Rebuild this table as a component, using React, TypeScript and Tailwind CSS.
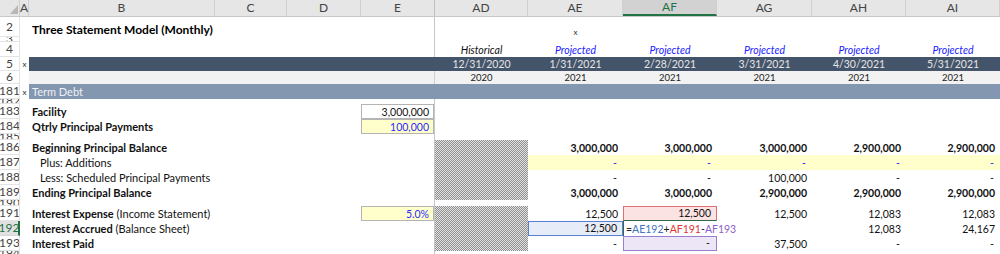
import type { ReactNode } from "react"

const dataW = ["w-[95px]", "w-[94px]", "w-[95px]", "w-[94px]", "w-[94px]"]
const hatch =
  "bg-[image:repeating-conic-gradient(#8e8e8e_0_25%,#e4e4e4_0_50%)] bg-[length:2px_2px] bg-fixed"

const headers = [
  { l: "AE", w: "w-[95px]" },
  { l: "AF", w: "w-[94px]", on: true },
  { l: "AG", w: "w-[95px]" },
  { l: "AH", w: "w-[94px]" },
  { l: "AI", w: "w-[94px]" },
]

const dates = ["1/31/2021", "2/28/2021", "3/31/2021", "4/30/2021", "5/31/2021"]

function RowNum({ n, active }: { n: string; active?: boolean }) {
  return (
    <div
      className={`flex w-[20px] shrink-0 items-center justify-center overflow-hidden border-b text-[12px] leading-none ${
        active
          ? "border-r-2 border-b-[#d6d6d6] border-r-[#217346] bg-[#e1e1e1] text-[#217346]"
          : "border-r border-[#e3e3e3] bg-white text-[#444]"
      }`}
    >
      {n}
    </div>
  )
}

function Gap({ n, h }: { n: string; h: string }) {
  return (
    <div className={`flex ${h} overflow-hidden`}>
      <RowNum n={n} />
      <div className="w-[414px] shrink-0" />
      <div className="w-[1px] shrink-0 bg-[#c6c6c6]" />
    </div>
  )
}

type LineProps = {
  n: string
  label?: ReactNode
  indent?: boolean
  e?: ReactNode
  hatched?: boolean
  vals?: ReactNode[]
  cellCls?: string[]
  valCls?: string
  rowBg?: string
  active?: boolean
}

function Line({ n, label, indent, e, hatched, vals = [], cellCls = [], valCls = "", rowBg = "", active }: LineProps) {
  return (
    <div className="flex h-[15px]">
      <RowNum n={n} active={active} />
      <div className="w-[9px] shrink-0" />
      <div
        className={`flex w-[332px] shrink-0 items-end whitespace-nowrap pb-[2px] text-[11px] leading-none text-[#111] ${
          indent ? "pl-[11px]" : "pl-[3px]"
        }`}
      >
        {label}
      </div>
      <div className="w-[73px] shrink-0">{e}</div>
      <div className="w-[1px] shrink-0 bg-[#c6c6c6]" />
      <div className={`w-[93px] shrink-0 ${hatched ? hatch : ""}`} />
      <div className={`flex flex-1 ${rowBg}`}>
        {dataW.map((w, i) => (
          <div
            key={w + i}
            className={`${w} flex shrink-0 items-end justify-end whitespace-nowrap pb-[2px] pr-[5px] text-[10.5px] leading-none text-[#111] ${valCls} ${
              cellCls[i] ?? ""
            }`}
          >
            {vals[i]}
          </div>
        ))}
      </div>
    </div>
  )
}

function InputBox({ children, yellow }: { children: ReactNode; yellow?: boolean }) {
  return (
    <div
      className={`flex h-full items-end justify-end border border-[#b4b4b4] pb-[1px] pr-[4px] text-[10.5px] leading-none ${
        yellow ? "bg-[#ffffcc] text-[#2b2bff]" : "bg-white text-[#111]"
      }`}
    >
      {children}
    </div>
  )
}

const dash = <span className="pr-[1px]">-</span>

export default function App() {
  return (
    <div className="h-[254px] w-[1000px] overflow-hidden bg-white font-['Lato',sans-serif]">
      {/* column headers */}
      <div className="flex h-[17px] border-b border-[#c8c8c8] bg-[#e6e6e6] text-[12px] leading-none text-[#444]">
        <div className="flex w-[20px] shrink-0 items-end justify-end border-r border-[#d0d0d0] pb-[2px] pr-[1px]">
          <svg width="8" height="9" viewBox="0 0 8 9">
            <path d="M8 0 L8 9 L0 9 Z" fill="#b8b8b8" />
          </svg>
        </div>
        <div className="flex w-[9px] shrink-0 items-center justify-center border-r border-[#d0d0d0]">A</div>
        <div className="flex w-[186px] shrink-0 items-center justify-center border-r border-[#d0d0d0]">B</div>
        <div className="flex w-[72px] shrink-0 items-center justify-center border-r border-[#d0d0d0]">C</div>
        <div className="flex w-[74px] shrink-0 items-center justify-center border-r border-[#d0d0d0]">D</div>
        <div className="flex w-[74px] shrink-0 items-center justify-center border-r border-[#c0c0c0]">E</div>
        <div className="flex w-[93px] shrink-0 items-center justify-center border-r border-[#d0d0d0]">AD</div>
        {headers.map((h) => (
          <div
            key={h.l}
            className={`flex ${h.w} shrink-0 items-center justify-center border-r ${
              h.on
                ? "border-b-2 border-[#d0d0d0] border-b-[#217346] bg-[#d2d2d2] text-[#217346]"
                : "border-[#d0d0d0]"
            }`}
          >
            {h.l}
          </div>
        ))}
      </div>

      {/* row 2 */}
      <div className="flex h-[20px]">
        <RowNum n="2" />
        <div className="w-[9px] shrink-0" />
        <div className="flex w-[332px] shrink-0 items-end whitespace-nowrap pb-[1px] pl-[3px] text-[12px] font-bold leading-none text-black">
          Three Statement Model (Monthly)
        </div>
        <div className="w-[73px] shrink-0" />
        <div className="w-[1px] shrink-0 bg-[#c6c6c6]" />
        <div className="w-[93px] shrink-0" />
        <div className="flex w-[95px] shrink-0 items-end justify-center pb-[1px] text-[8px] leading-none text-[#333]">x</div>
      </div>

      <Gap n="3" h="h-[5px]" />

      {/* row 4 */}
      <div className="flex h-[15px]">
        <RowNum n="4" />
        <div className="w-[414px] shrink-0" />
        <div className="w-[1px] shrink-0 bg-[#c6c6c6]" />
        <div className="flex w-[93px] shrink-0 items-end justify-center pb-[2px] text-[10.5px] italic leading-none text-[#111]">
          Historical
        </div>
        {dataW.map((w, i) => (
          <div
            key={w + i}
            className={`flex ${w} shrink-0 items-end justify-center pb-[2px] text-[10.5px] italic leading-none text-[#2020ff]`}
          >
            Projected
          </div>
        ))}
      </div>

      {/* row 5 */}
      <div className="flex h-[14px]">
        <RowNum n="5" />
        <div className="flex w-[9px] shrink-0 items-center justify-center text-[8px] leading-none text-[#333]">x</div>
        <div className="flex flex-1 bg-[#44546a] text-[10.5px] leading-none text-[#e6e6e6]">
          <div className="w-[406px] shrink-0" />
          <div className="flex w-[93px] shrink-0 items-center justify-center">12/31/2020</div>
          {dataW.map((w, i) => (
            <div key={w + i} className={`flex ${w} shrink-0 items-center justify-center`}>
              {dates[i]}
            </div>
          ))}
        </div>
      </div>

      {/* row 6 */}
      <div className="flex h-[13px]">
        <RowNum n="6" />
        <div className="w-[9px] shrink-0" />
        <div className="flex flex-1 bg-[#f2f2f2] text-[9.5px] leading-none text-[#222]">
          <div className="w-[405px] shrink-0" />
          <div className="w-[1px] shrink-0 bg-[#d0d0d0]" />
          <div className="flex w-[93px] shrink-0 items-center justify-center">2020</div>
          {dataW.map((w, i) => (
            <div key={w + i} className={`flex ${w} shrink-0 items-center justify-center`}>
              2021
            </div>
          ))}
        </div>
      </div>

      {/* row 181 */}
      <div className="flex h-[15px]">
        <RowNum n="181" />
        <div className="flex w-[9px] shrink-0 items-center justify-center text-[8px] leading-none text-[#333]">x</div>
        <div className="flex flex-1 items-center bg-[#8497b0] pl-[3px] text-[11px] leading-none text-[#eef1f5]">
          Term Debt
        </div>
      </div>

      <Gap n="182" h="h-[5px]" />

      <Line n="183" label={<b>Facility</b>} e={<InputBox>3,000,000</InputBox>} />
      <Line n="184" label={<b>Qtrly Principal Payments</b>} e={<InputBox yellow>100,000</InputBox>} />

      <Gap n="185" h="h-[6px]" />

      <Line
        n="186"
        label={<b>Beginning Principal Balance</b>}
        hatched
        valCls="font-bold"
        vals={["3,000,000", "3,000,000", "3,000,000", "2,900,000", "2,900,000"]}
      />
      <Line
        n="187"
        label="Plus: Additions"
        indent
        hatched
        rowBg="bg-[#ffffcc]"
        valCls="!text-[#2b2bff]"
        vals={[dash, dash, dash, dash, dash]}
      />
      <Line
        n="188"
        label="Less: Scheduled Principal Payments"
        indent
        hatched
        vals={[dash, dash, "100,000", dash, dash]}
      />
      <Line
        n="189"
        label={<b>Ending Principal Balance</b>}
        hatched
        valCls="font-bold"
        vals={["3,000,000", "3,000,000", "2,900,000", "2,900,000", "2,900,000"]}
      />

      <Gap n="190" h="h-[6px]" />

      <Line
        n="191"
        label={
          <>
            <b>Interest Expense</b>&nbsp;(Income Statement)
          </>
        }
        e={<InputBox yellow>5.0%</InputBox>}
        hatched
        vals={["12,500", "12,500", "12,500", "12,083", "12,083"]}
        cellCls={["", "border border-[#e07070] border-b-[#2f6a45] bg-[#fbe3e3]"]}
      />
      <Line
        n="192"
        active
        label={
          <>
            <b>Interest Accrued</b>&nbsp;(Balance Sheet)
          </>
        }
        hatched
        vals={[
          "12,500",
          <span className="text-[10.5px]">
            <span className="text-[#222]">=</span>
            <span className="text-[#4472c4]">AE192</span>
            <span className="text-[#222]">+</span>
            <span className="text-[#e03535]">AF191</span>
            <span className="text-[#222]">-</span>
            <span className="text-[#8e5fc9]">AF193</span>
          </span>,
          "",
          "12,083",
          "24,167",
        ]}
        cellCls={[
          "border border-[#5b80d0] bg-[#e7edf8]",
          "relative z-10 !justify-start overflow-visible border-l border-[#2f6a45] pl-[2px]",
        ]}
      />
      <Line
        n="193"
        label={<b>Interest Paid</b>}
        hatched
        vals={[dash, dash, "37,500", dash, dash]}
        cellCls={["", "border border-[#9a7fd0] bg-[#ece6f6]"]}
      />

      <Gap n="194" h="h-[5px]" />
    </div>
  )
}
